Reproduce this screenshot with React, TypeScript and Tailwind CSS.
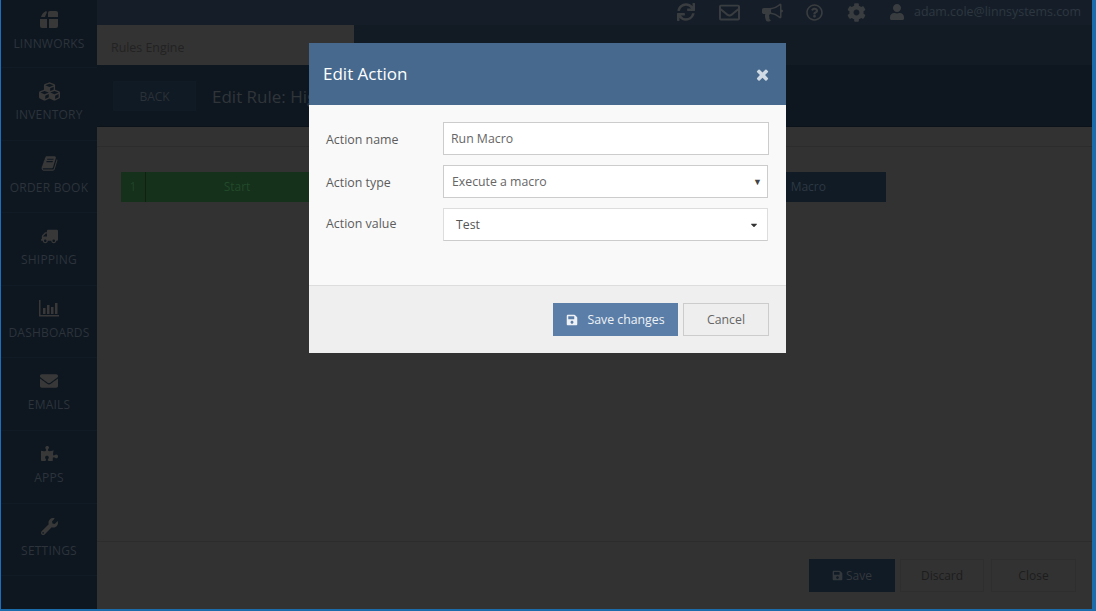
import React from "react";
import { FaCubes, FaTruck, FaEnvelope, FaPuzzlePiece, FaWrench, FaSync, FaRegEnvelope, FaRegQuestionCircle, FaCog, FaUser, FaCaretDown, FaSave } from "react-icons/fa";

const Logo = () => (
  <svg width="20" height="19" viewBox="0 0 20 19" fill="#383838">
    <path d="M1 9 L8 9 L8 18 L3 18 Q1 18 1 16 Z" />
    <path d="M10 9 L19 9 L19 16 Q19 18 17 18 L10 18 Z" />
    <path d="M2 7 Q3 3 7 1 L8 2 L6 7 Z" />
    <path d="M9 7 L9 3 Q9 1 11 1 L17 1 Q19 1 19 3 L19 7 Z" />
  </svg>
);

const Book = () => (
  <svg width="17" height="17" viewBox="0 0 1792 1792" fill="currentColor">
    <path d="M1703 478q40 57 18 129l-275 906q-19 64-76.5 107.5t-122.5 43.5h-923q-77 0-148.5-53.5t-99.5-131.5q-24-67-2-127 0-4 3-27t4-37q1-8-3-21.5t-3-19.5q2-11 8-21t16.5-23.5 16.5-23.5q23-38 45-91.5t30-91.5q3-10 .5-30t-.5-28q3-11 17-28t17-23q21-36 42-92t25-90q1-9-2.5-32t.5-28q4-13 22-30.5t22-22.5q19-26 42.5-84.5t27.5-96.5q1-8-3-25.5t-2-26.5q2-8 9-18t18-23 17-21q8-12 16.5-30.5t15-35 16-36 19.5-32 26.5-23.5 36-11.5 47.5 5.5l-1 3q38-9 51-9h761q74 0 114 56t18 130l-274 906q-36 119-71.5 153.5t-128.5 34.5h-869q-27 0-38 15-11 16-1 43 24 70 144 70h923q29 0 56-15.5t35-41.5l300-987q7-22 5-57 38 15 59 43zm-1064 2q-4 13 2 22.5t20 9.5h608q13 0 25.5-9.5t16.5-22.5l21-64q4-13-2-22.5t-20-9.5h-608q-13 0-25.5 9.5t-16.5 22.5zm-83 256q-4 13 2 22.5t20 9.5h608q13 0 25.5-9.5t16.5-22.5l21-64q4-13-2-22.5t-20-9.5h-608q-13 0-25.5 9.5t-16.5 22.5z" />
  </svg>
);

const Bullhorn = () => (
  <svg width="21" height="21" viewBox="0 0 1792 1792" fill="currentColor" className="mr-[23px]">
    <path d="M1664 640q53 0 90.5 37.5t37.5 90.5-37.5 90.5-90.5 37.5v384q0 52-38 90t-90 38q-417-347-812-380-58 19-91 66t-31 100.5 40 92.5q-20 33-23 65.5t6 58 33.5 55 48 50 61.5 50.5q-29 58-111.5 83t-168.5 11.5-132-55.5q-7-23-29.5-87.5t-32-94.5-23-89-15-101 3.5-98.5 22-110.5h-122q-66 0-113-47t-47-113v-192q0-66 47-113t113-47h480q435 0 896-384 52 0 90 38t38 90v384zm-128 604v-954q-394 302-768 343v270q377 42 768 341z" />
  </svg>
);

const Close = () => (
  <svg width="17" height="17" viewBox="0 0 1792 1792" fill="#cfdae4">
    <path d="M1490 1322q0 40-28 68l-136 136q-28 28-68 28t-68-28l-294-294-294 294q-28 28-68 28t-68-28l-136-136q-28-28-28-68t28-68l294-294-294-294q-28-28-28-68t28-68l136-136q28-28 68-28t68 28l294 294 294-294q28-28 68-28t68 28l136 136q28 28 28 68t-28 68l-294 294 294 294q28 28 28 68z" />
  </svg>
);

const Bars = () => (
  <svg width="20" height="17" viewBox="0 0 20 17" fill="currentColor">
    <rect x="0" y="0" width="1.5" height="16" />
    <rect x="0" y="15" width="20" height="1.5" />
    <rect x="4" y="8" width="2.5" height="6" />
    <rect x="8" y="5" width="2.5" height="9" />
    <rect x="12" y="7" width="2.5" height="7" />
    <rect x="16" y="3" width="2.5" height="11" />
  </svg>
);

const nav = [
  { label: "LINNWORKS", icon: <Logo /> },
  { label: "INVENTORY", icon: <FaCubes size={21} /> },
  { label: "ORDER BOOK", icon: <Book /> },
  { label: "SHIPPING", icon: <FaTruck size={17} className="-scale-x-100" /> },
  { label: "DASHBOARDS", icon: <Bars /> },
  { label: "EMAILS", icon: <FaEnvelope size={18} /> },
  { label: "APPS", icon: <FaPuzzlePiece size={17} /> },
  { label: "SETTINGS", icon: <FaWrench size={17} /> },
];

const Row = ({ label, children, top, shift }: { label: string; children: React.ReactNode; top: string; shift: string }) => (
  <div className={`flex items-start ${top}`}>
    <div className={`w-[134px] pl-[17px] text-[12.4px] leading-[18px] text-[#5c5c5c] ${shift}`}>{label}</div>
    {children}
  </div>
);

export default function App() {
  return (
    <div className="relative flex h-[611px] w-[1096px] overflow-hidden border-b-2 border-l border-r-4 border-b-[#1b6cab] border-l-[#1a6fc0] border-r-[#1b6cab] bg-[#323232] font-['Open_Sans',sans-serif]">
      <aside className="flex w-[96px] shrink-0 flex-col bg-[#0e1720]">
        {nav.map((n, i) => (
          <div key={n.label} className={`flex flex-col items-center border-b border-[#111b25] text-[#383838] ${i === 0 ? "h-[68px] pt-[7px]" : "h-[72.6px] pt-[11px]"}`}>
            <div className="flex h-[24px] items-center">{n.icon}</div>
            <div className={`whitespace-nowrap text-[12px] font-normal leading-[16px] tracking-[0.2px] text-[#2c333b] ${i === 0 ? "mt-[5px]" : "mt-[4px]"}`}>{n.label}</div>
          </div>
        ))}
      </aside>

      <main className="flex min-w-0 flex-1 flex-col">
        <div className="flex h-[25px] items-center justify-end bg-[#151e28] pb-[1px] pr-[11px] text-[#3a3d40]">
          <FaSync size={18} className="mr-[24px]" />
          <FaRegEnvelope size={21} className="mr-[22px]" />
          <Bullhorn />
          <FaRegQuestionCircle size={17} className="mr-[24px]" />
          <FaCog size={19} className="mr-[23px]" />
          <FaUser size={16} className="mr-[9px]" />
          <span className="text-[12.4px] leading-[18px] text-[#2d3740]">adam.cole@linnsystems.com</span>
        </div>
        <div className="flex h-[40px] bg-[#121b24]">
          <div className="flex w-[257px] items-center bg-[#333333] pl-[14px] pt-[6px] text-[12.4px] text-[#222222]">Rules Engine</div>
        </div>
        <div className="flex h-[62px] items-center border-b border-[#0b1219] bg-[#0e1720] pl-[16px] pt-[1px]">
          <div className="flex h-[30px] w-[83px] items-center justify-center border border-[#111b25] bg-[#101a24] pt-[2px] text-[12px] text-[#2b3138]">BACK</div>
          <div className="ml-[16px] whitespace-nowrap pt-[1px] text-[17px] text-[#30353a]">Edit Rule: High</div>
        </div>
        <div className="h-[20px] border-b border-[#2c2c2c] bg-[#323232]" />
        <div className="flex flex-1 items-start pl-[24px] pt-[25px]">
          <div className="flex h-[30px] w-[765px] text-[12px]">
            <div className="flex w-[25px] items-center justify-center border-r border-[#0f2212] bg-[#15301b] text-[#204428]">1</div>
            <div className="flex w-[182px] items-center justify-center bg-[#15301b] text-[#224a2a]">Start</div>
            <div className="flex flex-1 items-center justify-end bg-[#111b25] pr-[60px] text-[#2c3843]">Macro</div>
          </div>
        </div>
        <div className="flex h-[68px] items-start justify-end border-t border-[#2c2c2c] pr-[16px] pt-[17px] text-[12px]">
          <div className="flex h-[33px] w-[86px] items-center justify-center gap-[3px] bg-[#111b25] text-[#33383d]"><FaSave size={11} />Save</div>
          <div className="ml-[5px] flex h-[33px] w-[84px] items-center justify-center border border-[#2e2e2e] text-[#1d1d1d]">Discard</div>
          <div className="ml-[7px] flex h-[33px] w-[85px] items-center justify-center border border-[#2e2e2e] text-[#1d1d1d]">Close</div>
        </div>
      </main>

      <div className="absolute left-[308px] top-[43px] flex h-[310px] w-[477px] flex-col bg-[#f9f9f9]">
        <div className="flex h-[62px] items-center justify-between bg-[#46698d] pl-[14px] pr-[15px]">
          <span className="pb-[1px] text-[17px] text-white">Edit Action</span>
          <Close />
        </div>
        <div className="h-[180px]">
          <Row label="Action name" top="pt-[17px]" shift="pt-[9px]">
            <div className="flex h-[33px] w-[326px] items-center border border-[#ccc] bg-white pl-[7px] pt-[1px] text-[12.3px] text-[#666]">Run Macro</div>
          </Row>
          <Row label="Action type" top="pt-[10px]" shift="pt-[9px]">
            <div className="flex h-[33px] w-[325px] items-center justify-between border border-[#ccc] bg-white pl-[8px] pr-[5px] pt-[1px] text-[12.3px] text-[#666]">Execute a macro<span className="text-[9px] text-[#444]">▼</span></div>
          </Row>
          <Row label="Action value" top="pt-[10px]" shift="pt-[7px]">
            <div className="flex h-[33px] w-[325px] items-center justify-between border border-[#ddd] border-b-[#ccc] bg-white pl-[12px] pr-[8px] pt-[1px] text-[12.3px] text-[#555]">Test<FaCaretDown size={10} className="text-[#333]" /></div>
          </Row>
        </div>
        <div className="flex flex-1 items-start justify-end border-t border-[#ddd] bg-[#efefef] pr-[17px] pt-[17px]">
          <div className="flex h-[33px] w-[125px] items-center justify-center gap-[9px] bg-[#5b7ea8] pt-[1px] text-[12.3px] text-[#eef2f6]"><FaSave size={12} />Save changes</div>
          <div className="ml-[5px] flex h-[33px] w-[86px] items-center justify-center border border-[#ccc] bg-[#eeeeee] pt-[1px] text-[12.3px] text-[#666]">Cancel</div>
        </div>
      </div>
    </div>
  );
}
